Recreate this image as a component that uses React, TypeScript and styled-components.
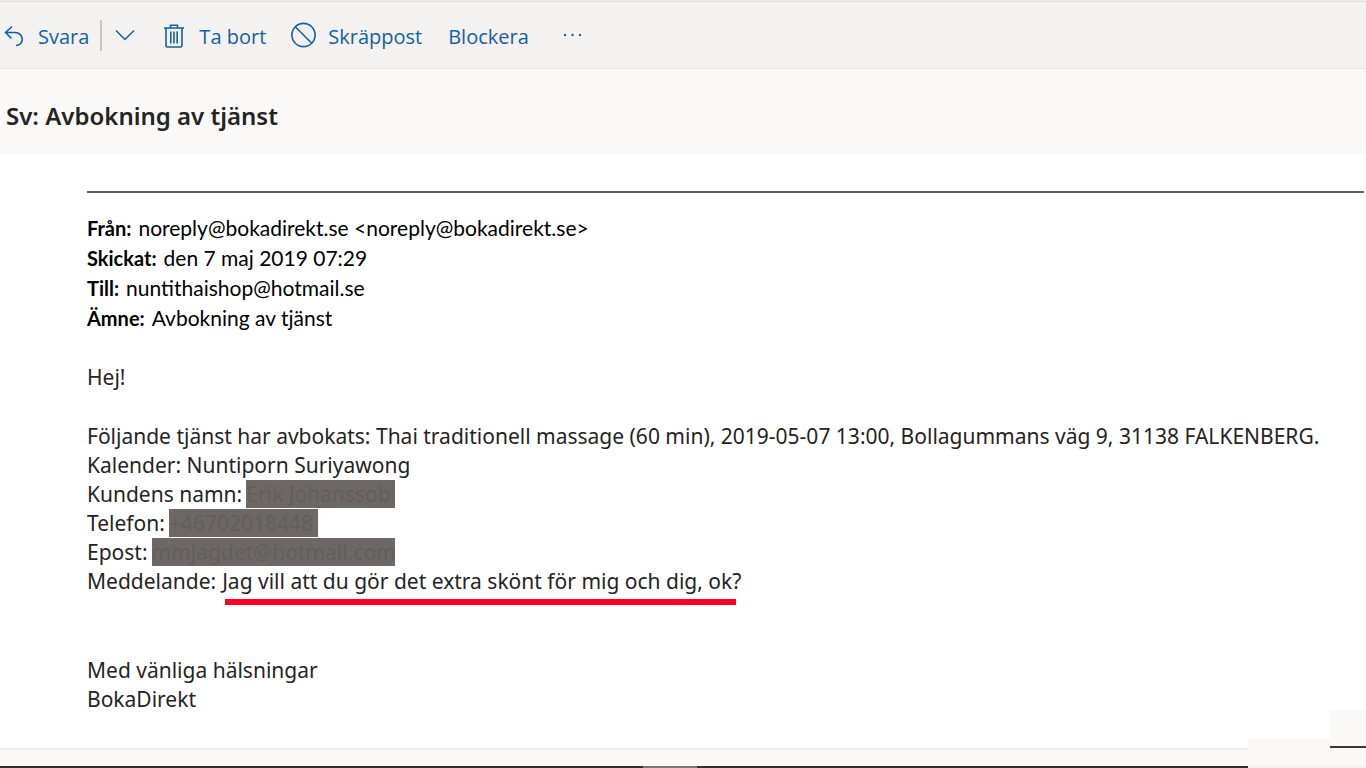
import React from "react";
import styled, { createGlobalStyle } from "styled-components";

const GlobalStyle = createGlobalStyle`
  * { box-sizing: border-box; }
  body { margin: 0; background: #ffffff; font-family: "Noto Sans", "Open Sans", sans-serif; color: #252423; }
`;

const Page = styled.div`
  position: relative;
  display: flex;
  flex-direction: column;
  min-height: 100vh;
  overflow: hidden;
`;

const Toolbar = styled.header`
  display: flex;
  align-items: center;
  height: 69px;
  padding: 4px 0 0 4px;
  background: #f3f2f1;
  border-top: 1px solid #e9eaec;
  border-bottom: 1px solid #e6e5e4;
  box-shadow: inset 0 1px 0 #dfe0e3;
`;

const ToolButton = styled.button<{ $gap?: number; $after?: number }>`
  display: flex;
  align-items: center;
  gap: ${(p) => p.$gap ?? 0}px;
  margin: 0 ${(p) => p.$after ?? 0}px 0 0;
  padding: 0;
  border: 0;
  background: none;
  color: #145ea8;
  font: 400 20px/28px "Open Sans", "Noto Sans", sans-serif;
  white-space: nowrap;
  cursor: pointer;
`;

const Divider = styled.span`
  width: 2px;
  height: 31px;
  margin: 0 13px 2px 11px;
  background: #c8c6c4;
`;

const Icon = styled.svg`
  display: block;
  flex: none;
  fill: none;
  stroke: currentColor;
`;

const SubjectBar = styled.section`
  padding: 31px 6px 22px;
  background: #faf9f8;
`;

const Subject = styled.h1`
  margin: 0;
  font-size: 24px;
  line-height: 32px;
  font-weight: 600;
`;

const Message = styled.main`
  flex: 1;
  padding: 37px 2px 33px 87px;
`;

const Rule = styled.hr`
  height: 2px;
  margin: 0 0 20px;
  border: 0;
  background: #5f5f5f;
`;

const Headers = styled.dl`
  margin: 0 0 30px;
  color: #000000;
  font: 400 21px/30px Lato, "Open Sans", sans-serif;
`;

const HeaderRow = styled.div`
  display: flex;
  gap: 7px;

  dt { font-size: 20px; font-weight: 700; }
  dd { margin: 0; }
`;

const Paragraph = styled.p<{ $after?: number }>`
  margin: 0 0 ${(p) => p.$after ?? 0}px;
  font-size: 21px;
  line-height: 29px;
`;

const Line = styled.span`
  display: flex;
  white-space: nowrap;
`;

const Redacted = styled.span<{ $width: number }>`
  width: ${(p) => p.$width}px;
  height: 28px;
  margin-left: 4px;
  background: #6d6866;
  color: #625e5c;
  line-height: 29px;
`;

const Marked = styled.span`
  position: relative;
  margin-left: 6px;

  &::after {
    content: "";
    position: absolute;
    left: 3px;
    right: 5px;
    top: 32px;
    height: 6px;
    background: #ff0028;
  }
`;

const Footer = styled.footer`
  display: flex;
  justify-content: center;
  height: 20px;
  background: #faf9f8;
  border-top: 2px solid #eeeeee;
  border-bottom: 2px solid #2f2f31;
`;

const Handle = styled.span`
  width: 54px;
  height: 2px;
  margin: 16px 26px 0 0;
  background: #77777a;
`;

const Corner = styled.div`
  position: absolute;
  right: 0;
  bottom: 0;
  width: 118px;
  height: 29px;
  background: #faf9f8;
  border-bottom: 2px solid #f3f2f1;
`;

const CornerTab = styled.div`
  position: absolute;
  right: 0;
  bottom: 20px;
  width: 36px;
  height: 38px;
  background: #faf9f8;
  border-bottom: 2px solid #38383a;
`;

const headers = [
  ["Från:", "noreply@bokadirekt.se <noreply@bokadirekt.se>"],
  ["Skickat:", "den 7 maj 2019 07:29"],
  ["Till:", "nuntithaishop@hotmail.se"],
  ["Ämne:", "Avbokning av tjänst"],
];

export default function App() {
  return (
    <Page>
      <GlobalStyle />
      <Toolbar>
        <ToolButton $gap={14}>
          <Icon width="20" height="24" viewBox="0 0 20 24" strokeWidth="1.6">
            <path d="M8 1.500 1.500 7.500l6 6M1.500 7.500h9.700a6.800 6.800 0 0 1 7 6.700c0 3-2 5.800-6.200 6.300" />
          </Icon>
          Svara
        </ToolButton>
        <Divider />
        <ToolButton $after={29} aria-label="Fler svarsalternativ">
          <Icon width="20" height="16" viewBox="0 0 20 16" strokeWidth="1.5">
            <path d="m1 1.500 9 9 9-9" />
          </Icon>
        </ToolButton>
        <ToolButton $gap={15} $after={25}>
          <Icon width="20" height="26" viewBox="0 0 20 26" strokeWidth="1.6">
            <path d="M0 4h20M6.500 4V1.200h7V4M2 4v17.500q0 1.500 1.500 1.500h13q1.500 0 1.500-1.500V4M6.800 7.500v12M10 7.500v12M13.200 7.500v12" />
          </Icon>
          Ta bort
        </ToolButton>
        <ToolButton $gap={12} $after={26}>
          <Icon width="25" height="29" viewBox="0 0 25 29" strokeWidth="1.6">
            <circle cx="12.500" cy="13" r="11.600" />
            <path d="m4.500 5 16 16" />
          </Icon>
          Skräppost
        </ToolButton>
        <ToolButton $after={34}>Blockera</ToolButton>
        <ToolButton aria-label="Fler åtgärder">
          <Icon width="20" height="12" viewBox="0 0 20 12">
            <g fill="currentColor" stroke="none">
              <circle cx="2" cy="4" r="1.200" />
              <circle cx="9.500" cy="4" r="1.200" />
              <circle cx="17" cy="4" r="1.200" />
            </g>
          </Icon>
        </ToolButton>
      </Toolbar>
      <SubjectBar>
        <Subject>Sv: Avbokning av tjänst</Subject>
      </SubjectBar>
      <Message>
        <Rule />
        <Headers>
          {headers.map(([name, value]) => (
            <HeaderRow key={name}>
              <dt>{name}</dt>
              <dd>{value}</dd>
            </HeaderRow>
          ))}
        </Headers>
        <Paragraph $after={30}>Hej!</Paragraph>
        <Paragraph $after={60}>
          <Line>
            Följande tjänst har avbokats: Thai traditionell massage (60 min), 2019-05-07 13:00, Bollagummans väg 9,
            31138 FALKENBERG.
          </Line>
          <Line>Kalender: Nuntiporn Suriyawong</Line>
          <Line>
            Kundens namn: <Redacted $width={149}>Erik Johanssob</Redacted>
          </Line>
          <Line>
            Telefon: <Redacted $width={149}>+46702018448</Redacted>
          </Line>
          <Line>
            Epost: <Redacted $width={243}>mmjagdet@hotmail.com</Redacted>
          </Line>
          <Line>
            Meddelande: <Marked>Jag vill att du gör det extra skönt för mig och dig, ok?</Marked>
          </Line>
        </Paragraph>
        <Paragraph>
          <Line>Med vänliga hälsningar</Line>
          <Line>BokaDirekt</Line>
        </Paragraph>
      </Message>
      <Footer>
        <Handle />
      </Footer>
      <Corner />
      <CornerTab />
    </Page>
  );
}
